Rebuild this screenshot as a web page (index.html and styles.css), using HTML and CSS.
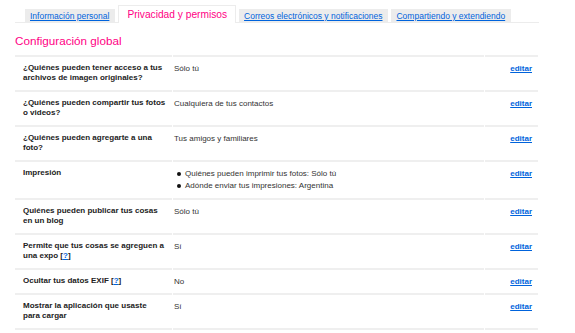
FILE: index.html
```html
<!DOCTYPE html>
<html lang="es">
<head>
    <meta charset="UTF-8">
    <meta name="viewport" content="width=device-width, initial-scale=1.0">
    <title>Privacidad y permisos</title>
    <link rel="stylesheet" href="styles.css">
</head>
<body>
    <div class="page">
        <ul class="tabs">
            <li class="tab"><a href="#">Información personal</a></li>
            <li class="tab active">Privacidad y permisos</li>
            <li class="tab"><a href="#">Correos electrónicos y notificaciones</a></li>
            <li class="tab"><a href="#">Compartiendo y extendiendo</a></li>
        </ul>

        <h3 class="title">Configuración global</h3>

        <table class="settings">
            <colgroup>
                <col class="col-label">
                <col class="col-value">
                <col class="col-edit">
            </colgroup>
            <tr>
                <th>¿Quiénes pueden tener acceso a tus<br>archivos de imagen originales?</th>
                <td>Sólo tú</td>
                <td class="edit"><a href="#">editar</a></td>
            </tr>
            <tr>
                <th>¿Quiénes pueden compartir tus fotos<br>o videos?</th>
                <td>Cualquiera de tus contactos</td>
                <td class="edit"><a href="#">editar</a></td>
            </tr>
            <tr>
                <th>¿Quiénes pueden agregarte a una<br>foto?</th>
                <td>Tus amigos y familiares</td>
                <td class="edit"><a href="#">editar</a></td>
            </tr>
            <tr>
                <th>Impresión</th>
                <td>
                    <ul class="bullets">
                        <li>Quiénes pueden imprimir tus fotos: Sólo tú</li>
                        <li>Adónde enviar tus impresiones: Argentina</li>
                    </ul>
                </td>
                <td class="edit"><a href="#">editar</a></td>
            </tr>
            <tr>
                <th>Quiénes pueden publicar tus cosas<br>en un blog</th>
                <td>Sólo tú</td>
                <td class="edit"><a href="#">editar</a></td>
            </tr>
            <tr>
                <th>Permite que tus cosas se agreguen a<br>una expo [<a href="#">?</a>]</th>
                <td>Sí</td>
                <td class="edit"><a href="#">editar</a></td>
            </tr>
            <tr>
                <th>Ocultar tus datos EXIF [<a href="#">?</a>]</th>
                <td>No</td>
                <td class="edit"><a href="#">editar</a></td>
            </tr>
            <tr>
                <th>Mostrar la aplicación que usaste<br>para cargar</th>
                <td>Sí</td>
                <td class="edit"><a href="#">editar</a></td>
            </tr>
        </table>
    </div>
</body>
</html>
```

FILE: styles.css
```css
body {
    font-family: 'Liberation Sans', Arial, sans-serif;
    margin: 0;
    padding: 0;
    background-color: #ffffff;
    color: #333333;
}

a {
    color: #0063dc;
}

.page {
    width: 524px;
    padding-left: 15px;
}

/* tabs */
.tabs {
    display: flex;
    align-items: flex-end;
    gap: 3px;
    margin: 0;
    padding: 5px 0 0 10px;
    list-style: none;
    border-bottom: 1px solid #ececec;
}

.tab {
    height: 13px;
    padding: 0 6px 0 5px;
    background-color: #ececec;
    font-size: 8.5px;
    line-height: 14px;
    white-space: nowrap;
}

.tab.active {
    height: 17px;
    margin-bottom: -1px;
    padding: 0 8px;
    background-color: #ffffff;
    border: 1px solid #ececec;
    border-bottom: none;
    color: #ff0084;
    font-size: 10.2px;
    line-height: 17px;
}

.title {
    margin: 11px 0 7px 0;
    color: #ff0084;
    font-size: 11.7px;
    font-weight: normal;
    line-height: 14px;
}

/* settings table */
.settings {
    width: 525px;
    margin-left: -1px;
    table-layout: fixed;
    border-collapse: separate;
    border-spacing: 1px 0;
    font-size: 8px;
    line-height: 11px;
}

.col-label {
    width: 157px;
}

.col-value {
    width: 311px;
}

.col-edit {
    width: 53px;
}

.settings th,
.settings td {
    padding: 6px 2px 6px 8px;
    border-top: 2px solid #efefef;
    vertical-align: top;
    text-align: left;
}

.settings tr:last-child th,
.settings tr:last-child td {
    border-bottom: 2px solid #efefef;
}

.settings th {
    color: #222222;
    font-weight: bold;
    line-height: 10px;
    padding-bottom: 7px;
    white-space: nowrap;
}

.settings td {
    padding-left: 1px;
}

.settings td.edit {
    padding-right: 6px;
    text-align: right;
    font-weight: bold;
}

.bullets {
    margin: 0;
    padding: 0;
    list-style: none;
}

.bullets li {
    position: relative;
    padding-left: 11px;
    line-height: 12px;
}

.bullets li::before {
    content: "";
    position: absolute;
    left: 3px;
    top: 4px;
    width: 4px;
    height: 4px;
    border-radius: 50%;
    background-color: #111111;
}
```
